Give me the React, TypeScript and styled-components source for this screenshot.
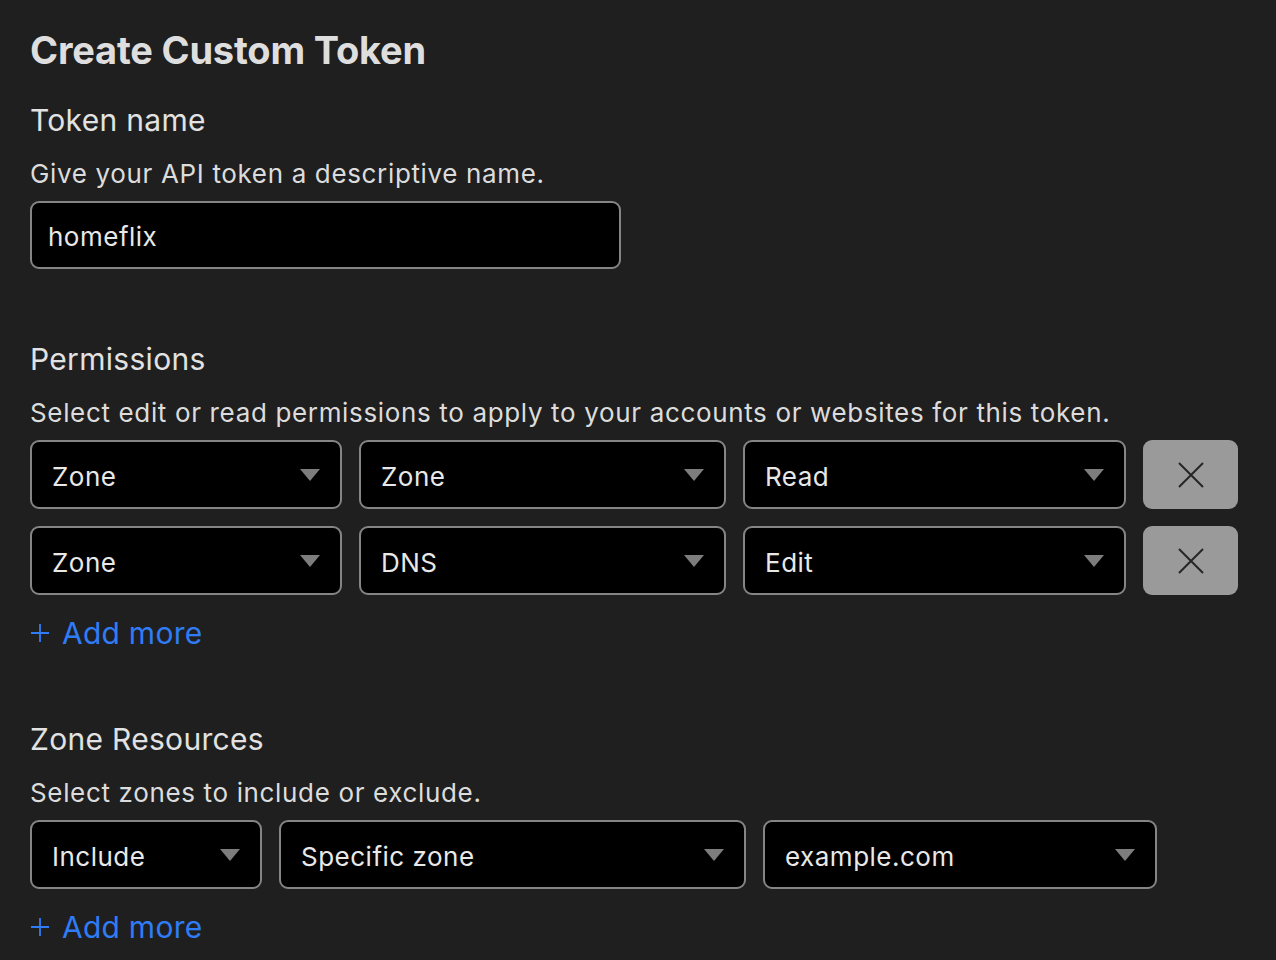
import React from "react";
import styled, { createGlobalStyle } from "styled-components";

const GlobalStyle = createGlobalStyle`
	html, body {
		margin: 0;
		padding: 0;
		background: #1f1f1f;
	}
	body {
		font-family: Inter, "Noto Sans", "Liberation Sans", sans-serif;
		color: #e4e4e4;
		-webkit-font-smoothing: antialiased;
	}
`;

const Page = styled.div`
	padding: 27px 30px 40px;
	width: 1276px;
	box-sizing: border-box;
	min-height: 960px;
`;

const Title = styled.h1`
	margin: 0 0 29px;
	font-size: 38px;
	line-height: 46px;
	font-weight: 700;
	color: #dedede;
	letter-spacing: -0.2px;
`;

const Section = styled.section<{ $gap?: number }>`
	margin-top: ${(p) => p.$gap ?? 0}px;
`;

const Heading = styled.h2`
	margin: 0 0 20px;
	font-size: 30px;
	line-height: 36px;
	font-weight: 400;
	color: #e2e2e2;
	letter-spacing: 0.3px;
`;

const Hint = styled.p`
	margin: 0 0 11px;
	font-size: 26px;
	line-height: 32px;
	color: #dcdcdc;
	letter-spacing: 0.65px;
`;

const TextInput = styled.div`
	width: 591px;
	height: 68px;
	box-sizing: border-box;
	border: 2px solid #858585;
	border-radius: 9px;
	background: #000;
	padding: 2px 16px 0;
	display: flex;
	align-items: center;
	font-size: 26px;
	letter-spacing: 0.5px;
	color: #e8e8e8;
`;

const Rows = styled.div`
	display: flex;
	flex-direction: column;
	gap: 17px;
`;

const Row = styled.div`
	display: flex;
	gap: 17px;
`;

const SelectBox = styled.div<{ $w: number }>`
	width: ${(p) => p.$w}px;
	height: 69px;
	box-sizing: border-box;
	border: 2px solid #858585;
	border-radius: 9px;
	background: #000;
	padding: 0 20px;
	display: flex;
	align-items: center;
	justify-content: space-between;
	font-size: 26px;
	letter-spacing: 0.5px;
	color: #e8e8e8;
`;

const Label = styled.span`
	padding-top: 4px;
`;

const Caret = styled.span`
	width: 0;
	height: 0;
	border-left: 10px solid transparent;
	border-right: 10px solid transparent;
	border-top: 12px solid #7d7d7d;
`;

const RemoveButton = styled.button`
	width: 95px;
	height: 69px;
	border: none;
	border-radius: 9px;
	background: #9a9a9a;
	display: flex;
	align-items: center;
	justify-content: center;
	padding: 0;
	cursor: pointer;
`;

const AddMore = styled.a`
	display: inline-flex;
	align-items: center;
	gap: 12px;
	margin-top: 20px;
	font-size: 30px;
	line-height: 36px;
	letter-spacing: 0.25px;
	color: #2f7cf6;
	text-decoration: none;
	cursor: pointer;
`;

const Select = ({ w, label }: { w: number; label: string }) => (
	<SelectBox $w={w}>
		<Label>{label}</Label>
		<Caret />
	</SelectBox>
);

const Remove = () => (
	<RemoveButton aria-label="Remove">
		<svg width="26" height="26" viewBox="0 0 26 26">
			<path d="M1 1L25 25M25 1L1 25" stroke="#262626" strokeWidth="2" />
		</svg>
	</RemoveButton>
);

const Add = () => (
	<AddMore>
		<svg width="20" height="20" viewBox="0 0 20 20">
			<path d="M10 1V19M1 10H19" stroke="#2f7cf6" strokeWidth="1.8" />
		</svg>
		Add more
	</AddMore>
);

const permissions = [
	["Zone", "Zone", "Read"],
	["Zone", "DNS", "Edit"],
];

const App = () => {
	return (
		<>
			<GlobalStyle />
			<Page>
				<Title>Create Custom Token</Title>

				<Section>
					<Heading>Token name</Heading>
					<Hint>Give your API token a descriptive name.</Hint>
					<TextInput>homeflix</TextInput>
				</Section>

				<Section $gap={72}>
					<Heading>Permissions</Heading>
					<Hint>
						Select edit or read permissions to apply to your accounts or
						websites for this token.
					</Hint>
					<Rows>
						{permissions.map((p, i) => (
							<Row key={i}>
								<Select w={312} label={p[0]} />
								<Select w={367} label={p[1]} />
								<Select w={383} label={p[2]} />
								<Remove />
							</Row>
						))}
					</Rows>
					<Add />
				</Section>

				<Section $gap={70}>
					<Heading>Zone Resources</Heading>
					<Hint>Select zones to include or exclude.</Hint>
					<Row>
						<Select w={232} label="Include" />
						<Select w={467} label="Specific zone" />
						<Select w={394} label="example.com" />
					</Row>
					<Add />
				</Section>
			</Page>
		</>
	);
};

export default App;
